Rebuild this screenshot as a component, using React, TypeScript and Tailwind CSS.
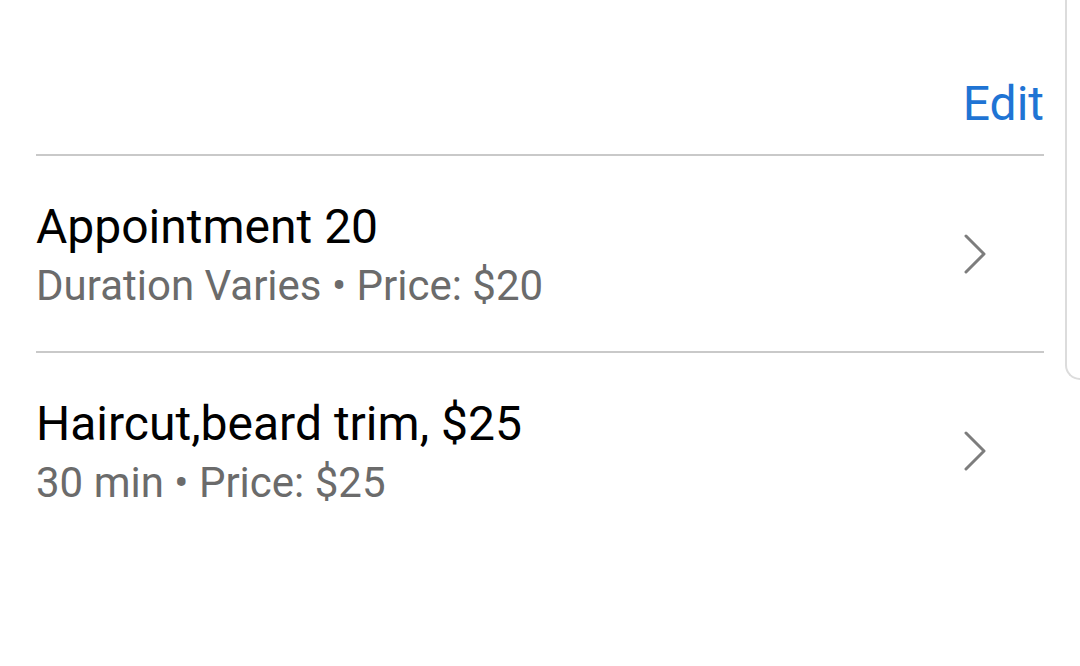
const services = [
  { name: 'Appointment 20', duration: 'Duration Varies', price: '$20' },
  { name: 'Haircut,beard trim, $25', duration: '30 min', price: '$25' },
];

function Chevron() {
  return (
    <svg width="24" height="40" viewBox="0 0 24 40" fill="none" className="shrink-0 mr-[57px]">
      <path d="M3 2 L21 20 L3 38" stroke="#7d7d7d" strokeWidth="3" strokeLinecap="round" strokeLinejoin="round" />
    </svg>
  );
}

export default function App() {
  return (
    <div className="flex h-[666px] w-[1080px] overflow-hidden bg-white" style={{ fontFamily: 'Roboto, sans-serif' }}>
      <div className="ml-[36px] flex w-[1008px] flex-col">
        <div className="flex h-[154px] justify-end pt-[76px]">
          <span className="text-[48px] leading-[56px] text-[#1f74d4]">Edit</span>
        </div>
        {services.map((s) => (
          <div key={s.name}>
            <div className="h-[2px] bg-[#c9c9c9]" />
            <div className="flex h-[195px] items-center justify-between">
              <div className="self-start pt-[43px]">
                <div className="text-[48px] leading-[56px] text-black">{s.name}</div>
                <div className="mt-[7px] text-[42px] leading-[48px] text-[#6b6b6b]">
                  {s.duration} • Price: {s.price}
                </div>
              </div>
              <Chevron />
            </div>
          </div>
        ))}
      </div>
      <div className="ml-[21px] h-[380px] w-[15px] rounded-bl-[16px] border-b-2 border-l-2 border-[#dcdcdc]" />
    </div>
  );
}
